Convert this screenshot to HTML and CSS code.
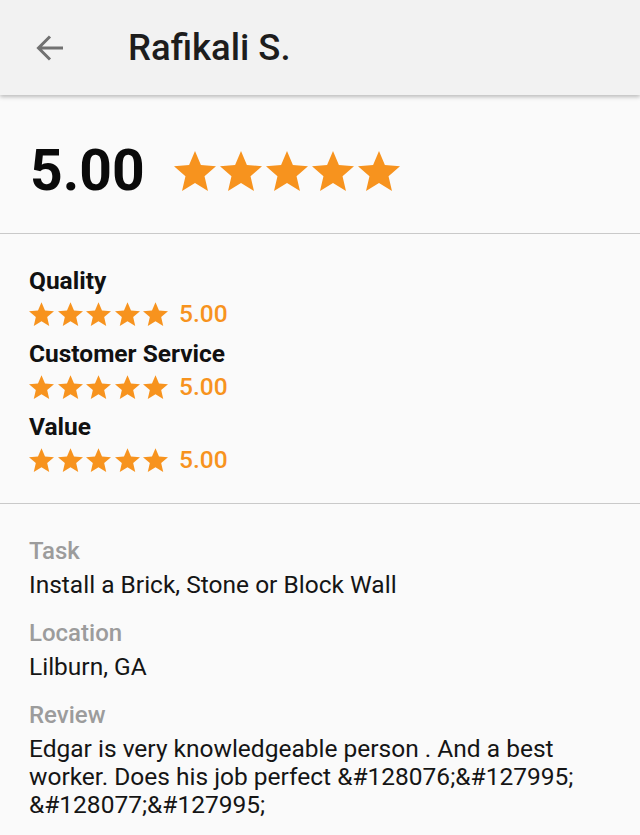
FILE: index.html
```html
<!DOCTYPE html>
<html>

<head>
	<title>Rafikali S.</title>
	<link rel="stylesheet" href="styles.css">
</head>

<body>
	<svg class="defs" width="0" height="0">
		<symbol id="star" viewBox="2 2 20 19">
			<path d="M12 17.27L18.18 21l-1.64-7.03L22 9.24l-7.19-.61L12 2 9.19 8.63 2 9.24l5.46 4.73L5.82 21z" />
		</symbol>
	</svg>

	<header class="toolbar">
		<button class="back" aria-label="Back">
			<svg viewBox="0 0 30 30" width="30" height="30">
				<path d="M28 15H4M15 3.5L3.5 15 15 26.5" fill="none" stroke="currentColor" stroke-width="3" />
			</svg>
		</button>
		<h1 class="title">Rafikali S.</h1>
	</header>

	<section class="overall">
		<span class="score">5.00</span>
		<div class="stars stars-big">
			<svg><use href="#star" /></svg>
			<svg><use href="#star" /></svg>
			<svg><use href="#star" /></svg>
			<svg><use href="#star" /></svg>
			<svg><use href="#star" /></svg>
		</div>
	</section>

	<section class="criteria">
		<div class="criterion">
			<div class="criterion-name">Quality</div>
			<div class="criterion-rating">
				<div class="stars stars-small">
					<svg><use href="#star" /></svg>
					<svg><use href="#star" /></svg>
					<svg><use href="#star" /></svg>
					<svg><use href="#star" /></svg>
					<svg><use href="#star" /></svg>
				</div>
				<span class="criterion-score">5.00</span>
			</div>
		</div>
		<div class="criterion">
			<div class="criterion-name">Customer Service</div>
			<div class="criterion-rating">
				<div class="stars stars-small">
					<svg><use href="#star" /></svg>
					<svg><use href="#star" /></svg>
					<svg><use href="#star" /></svg>
					<svg><use href="#star" /></svg>
					<svg><use href="#star" /></svg>
				</div>
				<span class="criterion-score">5.00</span>
			</div>
		</div>
		<div class="criterion">
			<div class="criterion-name">Value</div>
			<div class="criterion-rating">
				<div class="stars stars-small">
					<svg><use href="#star" /></svg>
					<svg><use href="#star" /></svg>
					<svg><use href="#star" /></svg>
					<svg><use href="#star" /></svg>
					<svg><use href="#star" /></svg>
				</div>
				<span class="criterion-score">5.00</span>
			</div>
		</div>
	</section>

	<section class="details">
		<div class="field">
			<div class="field-label">Task</div>
			<div class="field-value">Install a Brick, Stone or Block Wall</div>
		</div>
		<div class="field">
			<div class="field-label">Location</div>
			<div class="field-value">Lilburn, GA</div>
		</div>
		<div class="field">
			<div class="field-label">Review</div>
			<div class="field-value">Edgar is very knowledgeable person . And a best worker. Does his job perfect &amp;#128076;&amp;#127995;<wbr>&amp;#128077;&amp;#127995;</div>
		</div>
	</section>
</body>

</html>
```

FILE: styles.css
```css
* {
	box-sizing: border-box;
}

body {
	margin: 0;
	background: #fafafa;
	font-family: Roboto, "Liberation Sans", sans-serif;
	color: #111;
}

.defs {
	position: absolute;
}

.toolbar {
	display: flex;
	align-items: center;
	height: 95px;
	padding-left: 35px;
	background: #f2f2f2;
	box-shadow: 0 2px 4px rgba(0, 0, 0, 0.25);
}

.back {
	display: flex;
	padding: 0;
	border: none;
	background: none;
	color: #717171;
}

.title {
	margin: 0 0 0 63px;
	font-size: 36.5px;
	font-weight: 500;
	color: #1d1d1d;
}

.overall {
	display: flex;
	align-items: center;
	gap: 29px;
	height: 139px;
	padding: 13px 30px 0;
	border-bottom: 1px solid #c9c9c9;
}

.score {
	font-size: 57px;
	font-weight: 700;
	color: #0a0a0a;
}

.stars {
	display: flex;
	fill: #f7931e;
}

.stars-big {
	gap: 4px;
}

.stars-big svg {
	width: 42px;
	height: 40px;
}

.stars-small {
	gap: 3.5px;
}

.stars-small svg {
	width: 25px;
	height: 24px;
}

.criteria {
	padding: 30px 29px 20px;
	border-bottom: 1px solid #c9c9c9;
}

.criterion {
	height: 73px;
}

.criterion-name {
	height: 33px;
	font-size: 24.5px;
	font-weight: 700;
	line-height: 33px;
}

.criterion-rating {
	display: flex;
	align-items: center;
	gap: 11px;
	height: 33px;
}

.criterion-score {
	font-size: 24.5px;
	font-weight: 500;
	color: #f7931e;
}

.details {
	padding: 30px 29px;
}

.field {
	margin-bottom: 17px;
}

.field-label {
	margin-bottom: 3px;
	font-size: 24px;
	font-weight: 500;
	line-height: 34px;
	color: #9c9c9c;
}

.field-value {
	font-size: 24.5px;
	line-height: 28px;
	color: #151515;
}
```
